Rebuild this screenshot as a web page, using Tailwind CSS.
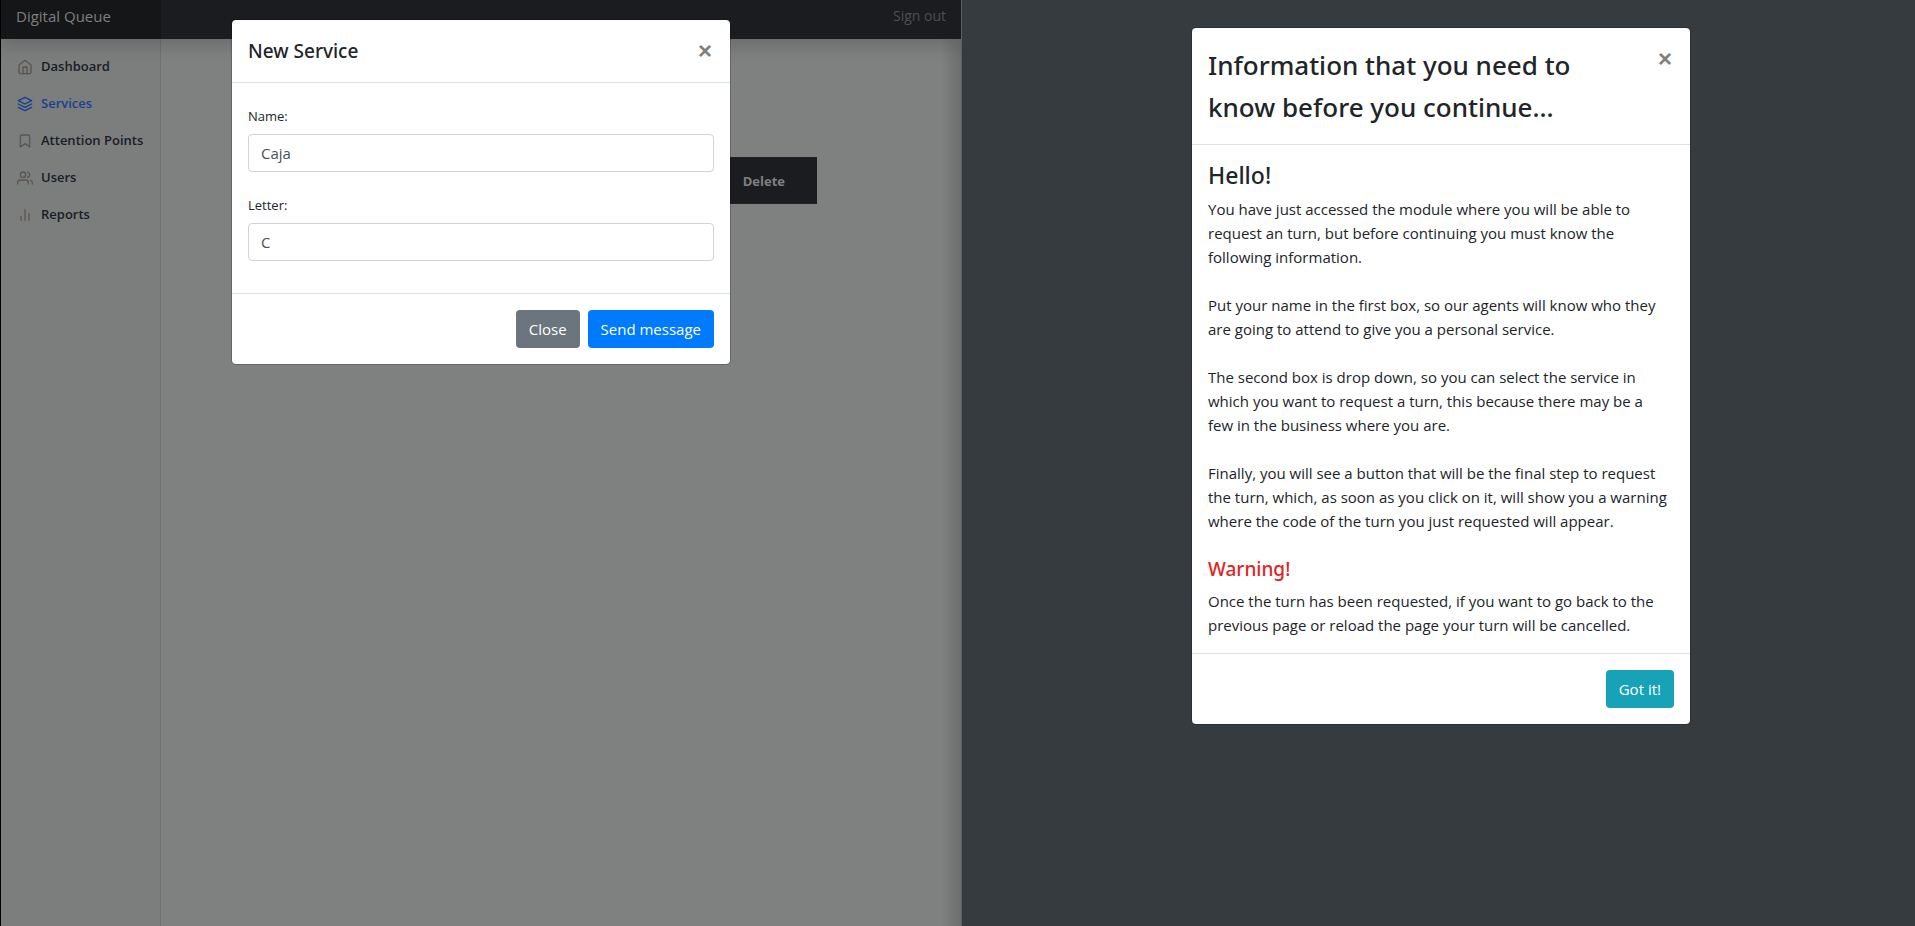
<!DOCTYPE html>
<html lang="en">
<head>
<meta charset="utf-8">
<meta name="viewport" content="width=device-width, initial-scale=1">
<title>Digital Queue</title>
<script src="https://cdn.jsdelivr.net/npm/@tailwindcss/browser@4"></script>
</head>
<body class="font-['Open_Sans','Noto_Sans',sans-serif] text-[15px] leading-6 text-[#212529]">
<div class="grid min-h-screen grid-cols-[961fr_954fr] overflow-hidden">

  <!-- Admin panel, dimmed behind its dialog -->
  <section class="relative flex flex-col overflow-hidden border-l border-black bg-[#7f8180]">
    <header class="relative z-10 flex h-[39px] items-stretch bg-[#1b1c20] shadow-[0_8px_16px_rgba(0,0,0,0.15)]">
      <a href="#" class="flex w-40 items-center bg-[#151617] px-[15px] pb-2 text-[#7f7f7f]">Digital Queue</a>
      <a href="#" class="ml-auto flex items-center px-[15px] pb-2 text-sm text-[#4d4e50]">Sign out</a>
    </header>
    <div class="flex flex-1">
      <nav aria-label="Main" class="w-40 shrink-0 border-r border-[#707170] bg-[#7c7e7d] pt-[9px]">
        <ul class="text-[13px] leading-[21px] font-semibold text-[#191c26]">
          <li><a href="#" class="flex items-center gap-2 py-2 pl-4 whitespace-nowrap">
            <svg class="size-4 shrink-0 text-[#5a544e]" viewBox="0 0 24 24" fill="none" stroke="currentColor" stroke-width="2" stroke-linecap="round" stroke-linejoin="round"><path d="M3 9l9-7 9 7v11a2 2 0 0 1-2 2H5a2 2 0 0 1-2-2z"/><path d="M9 22V12h6v10"/></svg>Dashboard</a></li>
          <li><a href="#" aria-current="page" class="flex items-center gap-2 py-2 pl-4 whitespace-nowrap text-[#173f92]">
            <svg class="size-4 shrink-0" viewBox="0 0 24 24" fill="none" stroke="currentColor" stroke-width="2" stroke-linecap="round" stroke-linejoin="round"><path d="M12 2L2 7l10 5 10-5z"/><path d="M2 17l10 5 10-5"/><path d="M2 12l10 5 10-5"/></svg>Services</a></li>
          <li><a href="#" class="flex items-center gap-2 py-2 pl-4 whitespace-nowrap">
            <svg class="size-4 shrink-0 text-[#5a5652]" viewBox="0 0 24 24" fill="none" stroke="currentColor" stroke-width="2" stroke-linecap="round" stroke-linejoin="round"><path d="M19 21l-7-5-7 5V5a2 2 0 0 1 2-2h10a2 2 0 0 1 2 2z"/></svg>Attention Points</a></li>
          <li><a href="#" class="flex items-center gap-2 py-2 pl-4 whitespace-nowrap">
            <svg class="size-4 shrink-0 text-[#5a5652]" viewBox="0 0 24 24" fill="none" stroke="currentColor" stroke-width="2" stroke-linecap="round" stroke-linejoin="round"><path d="M17 21v-2a4 4 0 0 0-4-4H5a4 4 0 0 0-4 4v2"/><circle cx="9" cy="7" r="4"/><path d="M23 21v-2a4 4 0 0 0-3-3.87"/><path d="M16 3.13a4 4 0 0 1 0 7.75"/></svg>Users</a></li>
          <li><a href="#" class="flex items-center gap-2 py-2 pl-4 whitespace-nowrap">
            <svg class="size-4 shrink-0 text-[#5e564c]" viewBox="0 0 24 24" fill="none" stroke="currentColor" stroke-width="2" stroke-linecap="round" stroke-linejoin="round"><path d="M18 20V10"/><path d="M12 20V4"/><path d="M6 20v-6"/></svg>Reports</a></li>
        </ul>
      </nav>
      <main class="flex flex-1 items-start justify-end pt-[118px] pr-36">
        <table class="w-[400px] border-y border-[#212226] bg-[#1b1c20] text-right text-[13px]">
          <thead><tr><th scope="col" class="h-[46px] pr-8 font-bold text-[#808080]">Delete</th></tr></thead>
        </table>
      </main>
    </div>
    <div class="pointer-events-none absolute inset-y-0 right-0 w-5 bg-linear-to-l from-black/15 to-transparent"></div>

    <!-- New Service dialog -->
    <div class="absolute inset-x-0 top-[19px] z-20 flex justify-center">
      <form role="dialog" aria-labelledby="service-title" class="w-[500px] rounded-[5px] border border-black/20 bg-white bg-clip-padding">
        <div class="flex items-start justify-between border-b border-[#dee2e6] p-4">
          <h2 id="service-title" class="font-['Noto_Sans',sans-serif] text-[19px] leading-[30px] font-medium">New Service</h2>
          <button type="button" aria-label="Close" class="-m-4 px-[18px] py-4 font-['Liberation_Sans',sans-serif] text-2xl leading-[30px] font-bold text-[#7f7f7f]">×</button>
        </div>
        <div class="p-4">
          <div class="mb-4">
            <label for="name" class="block py-[7px] text-[13px] leading-[21px]">Name:</label>
            <input id="name" type="text" value="Caja" class="block h-[38px] w-full rounded border border-[#ced4da] px-3 text-[#495057]">
          </div>
          <div class="mb-4">
            <label for="letter" class="block py-[7px] text-[13px] leading-[21px]">Letter:</label>
            <input id="letter" type="text" value="C" class="block h-[38px] w-full rounded border border-[#ced4da] px-3 text-[#495057]">
          </div>
        </div>
        <div class="flex justify-end gap-2 border-t border-[#dee2e6] p-4">
          <button type="button" class="h-[38px] rounded bg-[#6c757d] px-[13px] text-white">Close</button>
          <button type="submit" class="h-[38px] rounded bg-[#007bff] px-[13px] text-white">Send message</button>
        </div>
      </form>
    </div>
  </section>

  <!-- Turn request page, dimmed behind its notice -->
  <section class="flex items-start justify-center border-l border-[#5c5f61] bg-[#363b3f] pt-[27px] pl-[5px]">
    <div role="dialog" aria-labelledby="info-title" class="w-[500px] rounded-[5px] border border-black/20 bg-white bg-clip-padding">
      <div class="flex items-start justify-between border-b border-[#dee2e6] p-4">
        <h2 id="info-title" class="font-['Noto_Sans',sans-serif] text-[26px] leading-[42px] font-medium">Information that you need to<br>know before you continue...</h2>
        <button type="button" aria-label="Close" class="-m-4 px-[18px] py-4 font-['Liberation_Sans',sans-serif] text-2xl leading-[30px] font-bold text-[#7f7f7f]">×</button>
      </div>
      <div class="p-4">
        <h3 class="mb-2 font-['Noto_Sans',sans-serif] text-[23px] leading-7 font-medium">Hello!</h3>
        <div class="flex flex-col gap-6 whitespace-nowrap">
          <p>You have just accessed the module where you will be able to<br>request an turn, but before continuing you must know the<br>following information.</p>
          <p>Put your name in the first box, so our agents will know who they<br>are going to attend to give you a personal service.</p>
          <p>The second box is drop down, so you can select the service in<br>which you want to request a turn, this because there may be a<br>few in the business where you are.</p>
          <p>Finally, you will see a button that will be the final step to request<br>the turn, which, as soon as you click on it, will show you a warning<br>where the code of the turn you just requested will appear.</p>
          <div>
            <h3 class="mb-2 font-['Noto_Sans',sans-serif] text-[19px] leading-6 font-medium text-[#e02424]">Warning!</h3>
            <p>Once the turn has been requested, if you want to go back to the<br>previous page or reload the page your turn will be cancelled.</p>
          </div>
        </div>
      </div>
      <div class="flex justify-end border-t border-[#dee2e6] p-4">
        <button type="button" class="h-[38px] rounded bg-[#17a2b8] px-[13px] text-white">Got it!</button>
      </div>
    </div>
  </section>
</div>
</body>
</html>
